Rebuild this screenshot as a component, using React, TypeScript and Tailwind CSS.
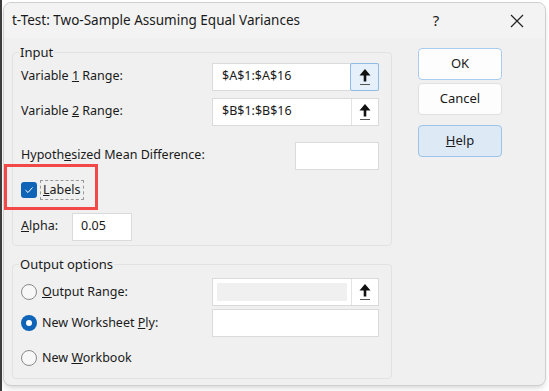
import React from "react"

const font = { fontFamily: '"Noto Sans", "Open Sans", sans-serif' }

function UpArrow() {
  return (
    <svg width="14" height="18" viewBox="0 0 14 18">
      <path d="M7 1 L12.5 7.5 H8.3 V13.5 H5.7 V7.5 H1.5 Z" fill="#111" />
      <path d="M2 16.5 L12 16.5" stroke="#555" strokeWidth="1" />
    </svg>
  )
}

function RangeBox({ value, focused, disabled }: { value?: string; focused?: boolean; disabled?: boolean }) {
  return (
    <div className="flex h-[28px] w-[167px] border border-[#dadada] bg-white">
      {disabled ? (
        <div className="flex-1 p-[4px]">
          <div className="h-full w-full bg-[#f0f0f0]" />
        </div>
      ) : (
        <div className="flex flex-1 items-center pl-[9px] text-[12.5px] text-[#1a1a1a]">{value}</div>
      )}
      <div
        className={
          focused
            ? "-m-px flex w-[29px] items-center justify-center rounded-[2px] border border-[#8fbce6] bg-[#e5f0fa]"
            : "flex w-[27px] items-center justify-center border-l border-[#e3e3e3] bg-white"
        }
      >
        <UpArrow />
      </div>
    </div>
  )
}

function Radio({ checked }: { checked?: boolean }) {
  return checked ? (
    <div className="flex h-[16px] w-[16px] items-center justify-center rounded-full bg-[#0f64b8]">
      <div className="h-[6px] w-[6px] rounded-full bg-white" />
    </div>
  ) : (
    <div className="h-[16px] w-[16px] rounded-full border border-[#8a8a8a] bg-[#f7f7f7]" />
  )
}

export default function App() {
  return (
    <div className="h-[391px] w-[549px] overflow-hidden border-l-[2px] border-[#3c3c3c] bg-white pl-px pt-[2px]" style={font}>
      <div className="relative h-[384px] w-[543px] rounded-lg border border-[#cfcfcf] bg-[#f0f0f0] text-[#1a1a1a] shadow-md">
        {/* title bar */}
        <div className="flex h-[35px] items-center rounded-t-lg bg-[#f3f3f3] pl-[8px]">
          <div className="flex-1 text-[13.5px]">t-Test: Two-Sample Assuming Equal Variances</div>
          <div className="mr-[33px] w-[40px] text-center text-[15px]">?</div>
          <div className="flex w-[56px] items-center justify-center">
            <svg width="14" height="14" viewBox="0 0 14 14">
              <path d="M1 1 L13 13 M13 1 L1 13" stroke="#222" strokeWidth="1.2" />
            </svg>
          </div>
        </div>

        <div className="flex pl-[8px] pt-[5px]">
          <div className="flex w-[380px] flex-col">
            {/* Input */}
            <fieldset className="rounded-[4px] border border-[#e2e2e2] pb-[4px] pl-[8px] pr-[12px]">
              <legend className="-ml-[2px] px-[1px] text-[13px]">Input</legend>
              <div className="flex h-[28px] items-center justify-between text-[12.5px]">
                <span>
                  Variable <u>1</u> Range:
                </span>
                <RangeBox value="$A$1:$A$16" focused />
              </div>
              <div className="mt-[7px] flex h-[28px] items-center justify-between text-[12.5px]">
                <span>
                  Variable <u>2</u> Range:
                </span>
                <RangeBox value="$B$1:$B$16" />
              </div>
              <div className="mt-[16px] flex h-[28px] items-center justify-between text-[12.5px]">
                <span>
                  Hypoth<u>e</u>sized Mean Difference:
                </span>
                <div className="h-[28px] w-[84px] border border-[#dadada] bg-white" />
              </div>
              <div className="mt-[10px] flex h-[20px] items-center text-[12.5px]">
                <div className="flex h-[16px] w-[16px] items-center justify-center rounded-[3px] bg-[#0f64b8]">
                  <svg width="10" height="10" viewBox="0 0 10 10">
                    <path d="M1.5 5.2 L4 7.5 L8.5 2.5" stroke="#fff" strokeWidth="1" fill="none" />
                  </svg>
                </div>
                <span className="ml-[3px] border border-dashed border-[#9a9a9a] px-[2px] leading-[18px]">
                  <u>L</u>abels
                </span>
              </div>
              <div className="mt-[13px] flex h-[28px] items-center text-[12.5px]">
                <span className="w-[51px]">
                  <u>A</u>lpha:
                </span>
                <div className="flex h-[28px] w-[60px] items-center border border-[#dadada] bg-white pl-[8px]">0.05</div>
              </div>
            </fieldset>

            {/* Output options */}
            <fieldset className="mt-[9px] rounded-[4px] border border-[#e2e2e2] pb-[8px] pl-[8px] pr-[12px]">
              <legend className="-ml-[2px] px-[1px] text-[13px]">Output options</legend>
              <div className="mt-[4px] flex h-[28px] items-center justify-between text-[12.5px]">
                <div className="flex items-center gap-[5px]">
                  <Radio />
                  <span>
                    <u>O</u>utput Range:
                  </span>
                </div>
                <RangeBox disabled />
              </div>
              <div className="mt-[3px] flex h-[28px] items-center justify-between text-[12.5px]">
                <div className="flex items-center gap-[5px]">
                  <Radio checked />
                  <span>
                    New Worksheet <u>P</u>ly:
                  </span>
                </div>
                <div className="h-[28px] w-[167px] border border-[#dadada] bg-white" />
              </div>
              <div className="mt-[9px] flex h-[24px] items-center gap-[5px] text-[12.5px]">
                <Radio />
                <span>
                  New <u>W</u>orkbook
                </span>
              </div>
            </fieldset>
          </div>

          {/* buttons */}
          <div className="ml-[26px] flex w-[84px] flex-col pt-[5px] text-[13px]">
            <button className="h-[32px] rounded-[4px] border border-[#a9cbee] bg-[#fdfdfd]">OK</button>
            <button className="mt-[3px] h-[32px] rounded-[4px] border border-[#e0e0e0] bg-[#fdfdfd]">Cancel</button>
            <button className="mt-[10px] h-[32px] rounded-[4px] border border-[#9cc4ea] bg-[#dde9f5]">
              <u>H</u>elp
            </button>
          </div>
        </div>

        {/* annotation */}
        <div className="pointer-events-none absolute left-0 top-[161px] h-[46px] w-[94px] border-[3px] border-[#f24848]" />
      </div>
    </div>
  )
}
